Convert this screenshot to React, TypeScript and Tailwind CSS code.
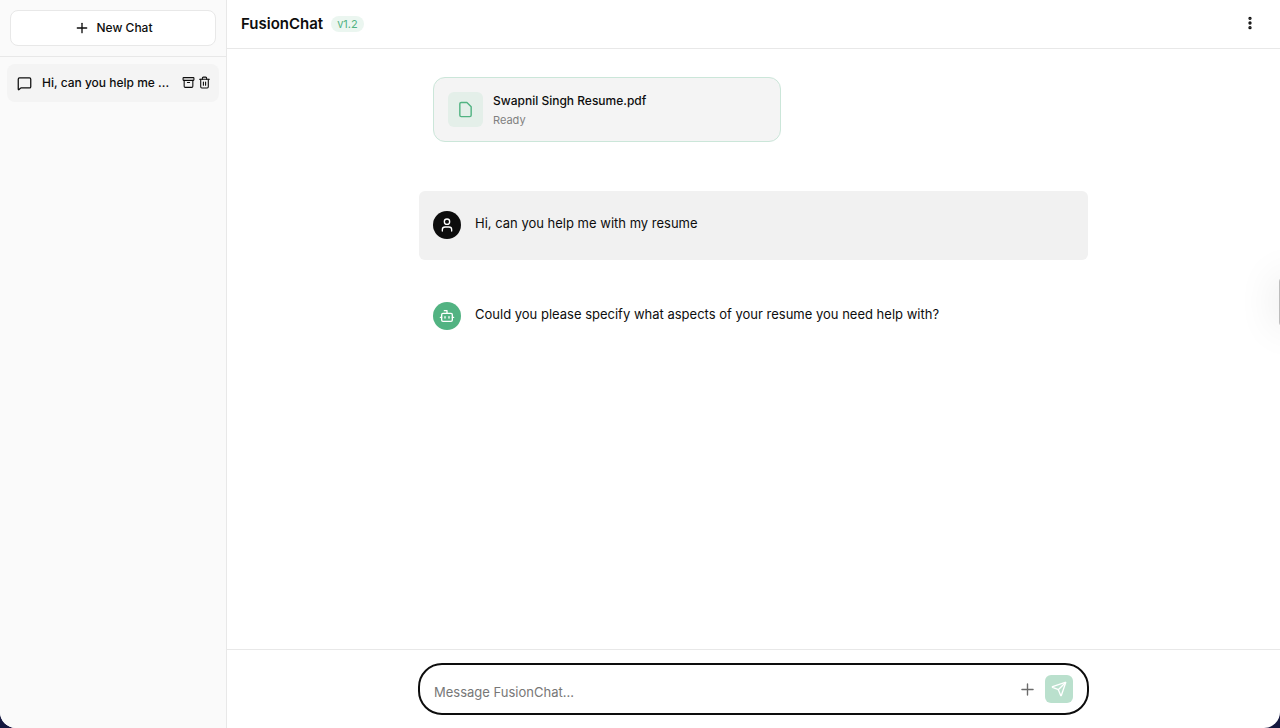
import { useState } from 'react';
import { Plus, MessageSquare, EllipsisVertical, User, Bot, Send, Archive, Trash2 } from 'lucide-react';

const chats = [{ id: 1, title: 'Hi, can you help me ...' }];

const messages = [
  { id: 1, role: 'user', text: 'Hi, can you help me with my resume' },
  { id: 2, role: 'assistant', text: 'Could you please specify what aspects of your resume you need help with?' },
];

function FileIcon() {
  return (
    <svg width="17" height="17" viewBox="0 0 24 24" fill="none" stroke="currentColor" strokeWidth="2" strokeLinecap="round" strokeLinejoin="round">
      <path d="M14 2H6a2 2 0 0 0-2 2v16a2 2 0 0 0 2 2h12a2 2 0 0 0 2-2V8z" />
    </svg>
  );
}

function Sidebar() {
  return (
    <aside className="flex w-[227px] shrink-0 flex-col border-r border-[#e8e8e8] bg-[#fafafa]">
      <div className="border-b border-[#e8e8e8] p-2.5">
        <button className="flex h-9 w-full items-center justify-center gap-[7px] rounded-lg border border-[#e8e8e8] bg-white text-xs font-medium">
          <Plus size={16} /> New Chat
        </button>
      </div>
      <nav className="p-[7px]">
        {chats.map((chat) => (
          <div key={chat.id} className="flex h-[38px] items-center rounded-lg bg-[#f4f4f4] pr-2 pl-2.5">
            <a href="#" className="flex flex-1 items-center gap-2.5 text-xs font-medium">
              <MessageSquare size={15} className="shrink-0" />
              <span className="whitespace-nowrap">{chat.title}</span>
            </a>
            <div className="flex gap-[3px] pb-0.5">
              <button aria-label="Archive chat">
                <Archive size={13} />
              </button>
              <button aria-label="Delete chat">
                <Trash2 size={13} />
              </button>
            </div>
          </div>
        ))}
      </nav>
    </aside>
  );
}

function Header() {
  return (
    <header className="flex h-[49px] shrink-0 items-center justify-between border-b border-[#e8e8e8] px-3.5">
      <div className="flex items-center gap-2">
        <h1 className="text-[15px] font-semibold">FusionChat</h1>
        <span className="rounded-full bg-[#ebf6f0] px-1.5 text-[11px] leading-4 text-[#52b382]">v1.2</span>
      </div>
      <button aria-label="More options" className="p-2 pb-2.5">
        <EllipsisVertical size={16} strokeWidth={3} />
      </button>
    </header>
  );
}

export default function App() {
  const [text, setText] = useState('');

  return (
    <div className="h-screen bg-[#15183f] font-[Inter,sans-serif] text-[#0d0d0d]">
      <div className="relative flex h-full overflow-hidden rounded-b-2xl bg-white">
        <Sidebar />
        <main className="flex min-w-0 flex-1 flex-col">
          <Header />

          <div className="flex-1 overflow-y-auto px-4 pt-7">
            <div className="mx-auto flex max-w-[669px] flex-col">
              <div className="mx-3.5 mb-[49px] flex h-[65px] w-[348px] items-center gap-2.5 rounded-xl border border-[#cbe6d9] bg-[#f4f4f4] px-3.5">
                <div className="flex size-[35px] items-center justify-center rounded-md bg-[#e4efe9] text-[#52b382]">
                  <FileIcon />
                </div>
                <div>
                  <p className="text-xs leading-5 font-medium">Swapnil Singh Resume.pdf</p>
                  <p className="text-[11px] leading-[18px] text-[#808080]">Ready</p>
                </div>
              </div>

              <div className="flex flex-col gap-[22px]">
                {messages.map((msg) => (
                  <div key={msg.id} className={`flex gap-3.5 rounded-md px-3.5 pt-5 pb-[21px] ${msg.role === 'user' ? 'bg-[#f1f1f1]' : ''}`}>
                    <div className={`flex size-7 shrink-0 items-center justify-center rounded-full text-white ${msg.role === 'user' ? 'bg-[#0d0d0d]' : 'bg-[#52b382]'}`}>
                      {msg.role === 'user' ? <User size={16} /> : <Bot size={16} />}
                    </div>
                    <p className="text-[13px] leading-6">{msg.text}</p>
                  </div>
                ))}
              </div>
            </div>
          </div>

          <footer className="border-t border-[#e8e8e8] px-4 py-[13px]">
            <form
              onSubmit={(e) => e.preventDefault()}
              className="mx-auto flex h-[52px] max-w-[671px] items-center rounded-3xl border-2 border-[#0d0d0d] px-3.5"
            >
              <input
                type="text"
                aria-label="Message"
                placeholder="Message FusionChat..."
                value={text}
                onChange={(e) => setText(e.target.value)}
                className="min-w-0 flex-1 pt-2 text-[13px] outline-none placeholder:text-[#777777]"
              />
              <button type="button" aria-label="Attach file" className="mr-2 text-[#6b6b6b]">
                <Plus size={19} strokeWidth={1.75} />
              </button>
              <button type="submit" aria-label="Send message" className="flex size-7 items-center justify-center rounded-md bg-[#bae0cd] text-white">
                <Send size={16} />
              </button>
            </form>
          </footer>
        </main>

        {/* edge of the collapsed side widget */}
        <div className="absolute top-[276px] -right-[19px] h-[52px] w-5 rounded-md bg-[#bdbdbd] shadow-[0_0_40px_rgba(0,0,0,0.12)]" />
      </div>
    </div>
  );
}
